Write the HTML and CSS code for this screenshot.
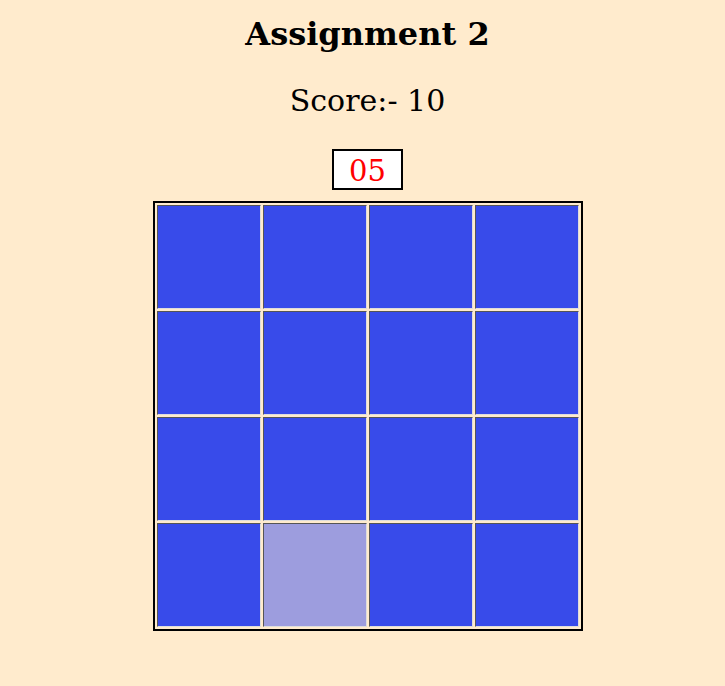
FILE: index.html
```html
<!DOCTYPE html>
<html>
<head>
<meta charset="utf-8">
<title>Assignment 2</title>
<link rel="stylesheet" href="styles.css">
</head>
<body>
<div class="page">
  <h1 class="title">Assignment 2</h1>
  <p class="score">Score:- 10</p>
  <div class="timer">05</div>
  <div class="board">
    <div class="cell"></div><div class="cell"></div><div class="cell"></div><div class="cell"></div>
    <div class="cell"></div><div class="cell"></div><div class="cell"></div><div class="cell"></div>
    <div class="cell"></div><div class="cell"></div><div class="cell"></div><div class="cell"></div>
    <div class="cell"></div><div class="cell lit"></div><div class="cell"></div><div class="cell"></div>
  </div>
</div>
</body>
</html>
```
FILE: styles.css
```css
html, body {
  margin: 0;
  padding: 0;
  background: #ffebcd;
}
body {
  font-family: "DejaVu Serif", serif;
  color: #000;
}
.page {
  display: flex;
  flex-direction: column;
  align-items: center;
  padding-top: 14px;
  padding-left: 10px;
}
.title {
  margin: 0;
  font-size: 32px;
  font-weight: bold;
  line-height: 40px;
}
.score {
  margin: 27px 0 0;
  font-size: 30px;
  line-height: 40px;
}
.timer {
  margin-top: 28px;
  width: 67px;
  height: 37px;
  border: 2px solid #000;
  background: #fff;
  color: #ff0000;
  font-size: 29px;
  line-height: 40px;
  text-align: center;
}
.board {
  margin-top: 11px;
  display: grid;
  grid-template-columns: repeat(4, 104px);
  grid-template-rows: repeat(4, 104px);
  gap: 2px;
  padding: 2px;
  border: 2px solid #000;
}
.cell {
  background: #384bea;
  border: 1px solid;
  border-color: #555 #ddd #ddd #555;
}
.cell.lit {
  background: #9d9dde;
}
```
